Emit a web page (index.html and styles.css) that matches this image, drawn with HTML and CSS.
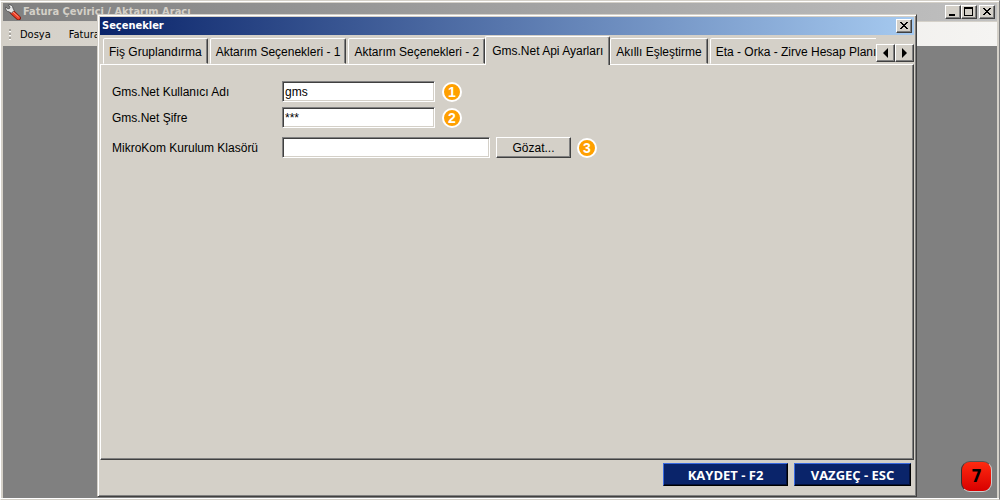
FILE: index.html
```html
<!DOCTYPE html>
<html lang="tr">
<head>
    <meta charset="UTF-8">
    <meta name="viewport" content="width=device-width, initial-scale=1.0">
    <title>Fatura Çevirici / Aktarım Aracı</title>
    <link rel="stylesheet" href="styles.css">
</head>
<body>
    <div class="window">
        <header class="title-bar">
            <svg class="app-icon" width="16" height="16" viewBox="0 0 16 16" aria-hidden="true">
                <path d="M7 8 L13.5 14" stroke="#7a1408" stroke-width="4.8" stroke-linecap="round"/>
                <path d="M7 8 L13.4 13.8" stroke="#f0402a" stroke-width="3.4" stroke-linecap="round"/>
                <path d="M7.6 7.6 L13.6 13" stroke="#ff9a80" stroke-width="1"/>
                <path d="M3.2 0.8 L5 3.2 L4.4 4.6 L2.8 4.8 L0.8 3 C0.2 5.4 1.4 7.6 4 7.8 L6.4 9.2 L9.2 6.4 L8 4.2 C8 1.8 5.6 0.2 3.2 0.8 Z" fill="#e6e6e6" stroke="#4a4a4a" stroke-width="0.8"/>
            </svg>
            <h1>Fatura Çevirici / Aktarım Aracı</h1>
            <div class="window-buttons">
                <button class="caption-button" aria-label="Simge durumuna küçült">
                    <svg width="14" height="12" viewBox="0 0 14 12"><path d="M3 8h6v2H3z"/></svg>
                </button>
                <button class="caption-button" aria-label="Ekranı kapla">
                    <svg width="14" height="12" viewBox="0 0 14 12"><path fill-rule="evenodd" d="M2 1h9v9H2zM3 3v6h7V3z"/></svg>
                </button>
                <button class="caption-button close" aria-label="Kapat">
                    <svg width="14" height="12" viewBox="0 0 14 12"><path d="M3 2h2v1h1v1h2V3h1V2h2v1h-1v1H9v1H8v1h1v1h1v1h1v1H9V8H8V7H6v1H5v1H3V8h1V7h1V6h1V5H5V4H4V3H3z"/></svg>
                </button>
            </div>
        </header>
        <nav class="menu-bar">
            <span class="grip"></span>
            <a href="#">Dosya</a>
            <a href="#">Fatura</a>
        </nav>
        <main class="workspace"></main>
        <div class="step-badge">7</div>
    </div>

    <!-- Options dialog -->
    <div class="dialog" role="dialog" aria-labelledby="dialogTitle">
        <div class="dialog-title">
            <h2 id="dialogTitle">Seçenekler</h2>
            <button class="caption-button" aria-label="Kapat">
                <svg width="14" height="12" viewBox="0 0 14 12"><path d="M3 2h2v1h1v1h2V3h1V2h2v1h-1v1H9v1H8v1h1v1h1v1h1v1H9V8H8V7H6v1H5v1H3V8h1V7h1V6h1V5H5V4H4V3H3z"/></svg>
            </button>
        </div>

        <div class="tab-row">
            <div class="tabs" role="tablist">
                <button class="tab" role="tab">Fiş Gruplandırma</button>
                <button class="tab" role="tab">Aktarım Seçenekleri - 1</button>
                <button class="tab" role="tab">Aktarım Seçenekleri - 2</button>
                <button class="tab active" role="tab" aria-selected="true">Gms.Net Api Ayarları</button>
                <button class="tab" role="tab">Akıllı Eşleştirme</button>
                <button class="tab" role="tab">Eta - Orka - Zirve Hesap Planı</button>
            </div>
            <div class="tab-scroll">
                <button class="scroll-button" aria-label="Önceki sekmeler">
                    <svg width="5" height="10" viewBox="0 0 5 10"><path d="M5 0v10L0 5z"/></svg>
                </button>
                <button class="scroll-button" aria-label="Sonraki sekmeler">
                    <svg width="5" height="10" viewBox="0 0 5 10"><path d="M0 0v10l5-5z"/></svg>
                </button>
            </div>
        </div>

        <form class="tab-page">
            <div class="field">
                <label for="userName">Gms.Net Kullanıcı Adı</label>
                <input type="text" id="userName" value="gms">
                <span class="hint">1</span>
            </div>
            <div class="field">
                <label for="userPass">Gms.Net Şifre</label>
                <input type="text" id="userPass" value="***">
                <span class="hint">2</span>
            </div>
            <div class="field folder">
                <label for="setupFolder">MikroKom Kurulum Klasörü</label>
                <input type="text" id="setupFolder">
                <button type="button" class="browse">Gözat...</button>
                <span class="hint">3</span>
            </div>
        </form>

        <div class="dialog-buttons">
            <button class="save">KAYDET - F2</button>
            <button class="cancel">VAZGEÇ - ESC</button>
        </div>
    </div>
</body>
</html>
```

FILE: styles.css
```css
* {
    box-sizing: border-box;
}
body {
    margin: 0;
    font-family: "Liberation Sans", Arial, sans-serif;
    font-size: 12px;
    color: #000;
    background: #d4d0c8;
}
button {
    margin: 0;
    padding: 0;
    border-radius: 0;
    font: inherit;
    color: inherit;
}
h1, h2 {
    flex: 1;
    margin: 0;
    font-family: "DejaVu Sans Condensed", Tahoma, sans-serif;
    font-size: 11px;
    line-height: 18px;
}
svg {
    display: block;
}

/* Main window */
.window {
    position: relative;
    display: flex;
    flex-direction: column;
    min-height: 100vh;
    padding: 1px 2px 1px 1px;
    border: 1px solid #fff;
    border-color: #d4d0c8 #808080 #d4d0c8 #fff;
    box-shadow: inset 0 1px #fff, inset 0 -1px #fff;
    background: #d4d0c8;
}
.title-bar {
    display: flex;
    align-items: center;
    height: 19px;
    margin: 1px 0 0 1px;
    padding: 0 2px;
    border-bottom: 1px solid #d4d0c8;
    background: linear-gradient(to right, #808080, #c0c0c0);
    color: #d4d0c8;
}
.app-icon {
    margin-right: 2px;
}
.window-buttons {
    display: flex;
}
.caption-button, .scroll-button, .browse {
    border: 1px solid;
    border-color: #fff #404040 #404040 #fff;
    background: #d4d0c8;
    box-shadow: inset -1px -1px #808080;
}
.caption-button {
    width: 16px;
    height: 14px;
}
.caption-button svg {
    shape-rendering: crispEdges;
}
.close {
    margin-left: 2px;
}
.menu-bar {
    display: flex;
    align-items: center;
    gap: 18px;
    height: 24px;
    margin-left: 1px;
    padding-left: 6px;
    background: linear-gradient(to right, #d4d0c8, #f5f4f2);
    font-family: "DejaVu Sans Condensed", Tahoma, sans-serif;
    font-size: 11px;
}
.menu-bar a {
    color: #000;
    text-decoration: none;
}
.grip {
    width: 2px;
    height: 11px;
    margin-right: -9px;
    background: repeating-linear-gradient(#a8a59e 0 2px, #fff 2px 3px, transparent 3px 4px);
}
.workspace {
    flex: 1;
    margin-left: 1px;
    background: #808080;
}
.step-badge {
    position: absolute;
    right: 7px;
    bottom: 7px;
    width: 31px;
    height: 31px;
    border: 1px solid;
    border-color: #555 #ccc #ccc #333;
    border-radius: 9px;
    background: linear-gradient(#ff2a10, #d80000);
    font-family: "DejaVu Sans Condensed", Tahoma, sans-serif;
    font-size: 17px;
    font-weight: bold;
    line-height: 29px;
    text-align: center;
}

/* Dialog */
.dialog {
    position: absolute;
    top: 14px;
    right: 83px;
    bottom: 3px;
    left: 97px;
    display: flex;
    flex-direction: column;
    padding: 2px;
    border: 1px solid;
    border-color: #d4d0c8 #404040 #404040 #d4d0c8;
    background: #d4d0c8;
    box-shadow: inset 1px 1px #fff, inset -1px -1px #808080;
}
.dialog-title {
    display: flex;
    align-items: center;
    height: 18px;
    padding: 0 2px;
    background: linear-gradient(to right, #0a246a, #a6caf0);
    color: #fff;
}
.dialog-title h2 {
    line-height: 20px;
}

.tab-row {
    display: flex;
    height: 29px;
    margin-top: 1px;
    margin-bottom: -1px;
}
.tabs {
    display: flex;
    flex: 1;
    align-items: flex-end;
    gap: 2px;
    min-width: 0;
    padding: 0 0 1px 3px;
    overflow: hidden;
}
.tab {
    flex: none;
    height: 26px;
    padding: 0 5px;
    border: 1px solid;
    border-color: #fff #404040 transparent #fff;
    border-radius: 2px 2px 0 0;
    background: #d4d0c8;
    box-shadow: inset -1px 0 #808080;
    line-height: 26px;
    white-space: nowrap;
}
.tab.active {
    z-index: 1;
    height: 29px;
    margin: 0 -2px -1px;
    padding: 0 6px 1px;
    border-bottom: 0;
}
.tab-scroll {
    display: flex;
    align-items: center;
    padding-top: 5px;
}
.scroll-button {
    display: flex;
    align-items: center;
    justify-content: center;
    width: 19px;
    height: 18px;
}

.tab-page {
    flex: 1;
    padding: 16px 11px;
    border: 1px solid;
    border-color: #fff #404040 #404040 #fff;
    box-shadow: inset -1px -1px #808080;
}
.field {
    display: flex;
    align-items: center;
    margin-bottom: 5px;
}
.folder {
    margin-top: 9px;
}
.field label {
    width: 170px;
}
.field input {
    width: 153px;
    height: 21px;
    padding: 0 2px;
    border: 1px solid;
    border-color: #808080 #fff #fff #808080;
    background: #fff;
    box-shadow: inset 1px 1px #404040, inset -1px -1px #d4d0c8;
    font: inherit;
}
.field.folder input {
    width: 208px;
}
.browse {
    width: 75px;
    height: 21px;
    margin-left: 6px;
}
.hint {
    width: 20px;
    height: 20px;
    margin-left: 7px;
    border: 2px solid #fff;
    border-radius: 50%;
    background: #ffa000;
    color: #fff;
    font-size: 14px;
    font-weight: bold;
    line-height: 16px;
    text-align: center;
}
.browse + .hint {
    margin-left: 6px;
}

.dialog-buttons {
    display: flex;
    justify-content: flex-end;
    gap: 6px;
    padding: 3px 3px 8px;
}
.dialog-buttons button {
    width: 117px;
    height: 23px;
    border: 1px solid;
    border-color: #3a6ae0 #000 #000 #3a6ae0;
    background: #0a246a;
    box-shadow: inset -1px -1px #04103a;
    color: #fff;
    font-family: "Open Sans", Tahoma, sans-serif;
    font-size: 13px;
    font-weight: bold;
    line-height: 20px;
}
.dialog-buttons .save {
    width: 125px;
}
```
